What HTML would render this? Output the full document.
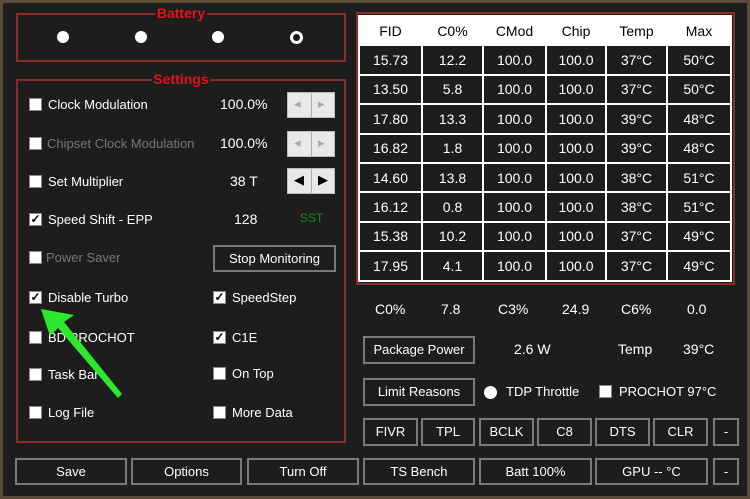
<html><head><style>
body{margin:0;width:750px;height:499px;background:#1d1d1d;font-family:"Liberation Sans",sans-serif;font-size:13px;color:#fff;position:relative;overflow:hidden}
.a{position:absolute;white-space:nowrap}
.box{position:absolute;border:2px solid #8b2c2c;box-sizing:border-box}
.ttl{position:absolute;color:#e0141a;font-weight:bold;font-size:14px;background:#1d1d1d;padding:0 2px;transform:translateX(-50%);top:-10px;left:50%}
.cb{position:absolute;width:13px;height:13px;background:#fff;border:1px solid #888;box-sizing:border-box;color:#000;font-size:12px;line-height:11px;text-align:center;font-weight:bold}
.btn{position:absolute;border:2px solid #7a7a7a;box-sizing:border-box;text-align:center;color:#fff;background:#1d1d1d}
.dot{position:absolute;width:12px;height:12px;border-radius:50%;background:#fff}
table{border-collapse:collapse;table-layout:fixed}
td{border:2px solid #fff;text-align:center;height:29.4px;padding:0;font-size:14px;line-height:14px}
.spin{position:absolute;width:48px;height:26px;background:#e8e8e8;border:1px solid #bbb;box-sizing:border-box}
.spin i{position:absolute;top:0;width:23px;height:24px;border-right:1px solid #aaa}
</style></head><body>
<div style="position:absolute;inset:0;border:3px solid #5a4a3a;box-sizing:border-box"></div>
<div class="box" style="left:16px;top:13px;width:330px;height:49px"><span class="ttl">Battery</span></div>
<div class="dot" style="left:57px;top:31px"></div><div class="dot" style="left:135px;top:31px"></div><div class="dot" style="left:212px;top:31px"></div>
<div class="dot" style="left:290px;top:31px;background:none;border:3px solid #fff;width:7px;height:7px"></div>
<div class="box" style="left:16px;top:79px;width:330px;height:364px"><span class="ttl">Settings</span></div>

<div class="cb" style="left:29px;top:98px"></div><div class="a" style="left:48px;top:97px">Clock Modulation</div><div class="a" style="left:220px;top:96px;font-size:14px">100.0%</div>
<div class="cb" style="left:29px;top:137px"></div><div class="a" style="left:47px;top:136px;color:#777">Chipset Clock Modulation</div><div class="a" style="left:220px;top:135px;font-size:14px">100.0%</div>
<div class="cb" style="left:29px;top:175px"></div><div class="a" style="left:48px;top:174px">Set Multiplier</div><div class="a" style="left:230px;top:173px;font-size:14px">38 T</div>
<div class="cb" style="left:29px;top:213px">✓</div><div class="a" style="left:48px;top:212px">Speed Shift - EPP</div><div class="a" style="left:234px;top:211px;font-size:14px">128</div><div class="a" style="left:300px;top:211px;color:#1a8a1a;font-size:12px">SST</div>
<div class="cb" style="left:29px;top:251px"></div><div class="a" style="left:46px;top:250px;color:#777">Power Saver</div>
<div class="btn" style="left:213px;top:245px;width:123px;height:27px;line-height:23px">Stop Monitoring</div>

<div class="spin" style="left:287px;top:92px"><i style="left:0"></i><span class="a" style="left:6px;top:3px;color:#aaa">◂</span><span class="a" style="left:30px;top:3px;color:#aaa">▸</span></div>
<div class="spin" style="left:287px;top:131px"><i style="left:0"></i><span class="a" style="left:6px;top:3px;color:#aaa">◂</span><span class="a" style="left:30px;top:3px;color:#aaa">▸</span></div>
<div class="spin" style="left:287px;top:168px"><i style="left:0"></i><span class="a" style="left:6px;top:3px;color:#000">◀</span><span class="a" style="left:30px;top:3px;color:#000">▶</span></div>

<div class="cb" style="left:29px;top:291px">✓</div><div class="a" style="left:48px;top:290px">Disable Turbo</div>
<div class="cb" style="left:29px;top:331px"></div><div class="a" style="left:48px;top:330px">BD PROCHOT</div>
<div class="cb" style="left:29px;top:368px"></div><div class="a" style="left:48px;top:367px">Task Bar</div>
<div class="cb" style="left:29px;top:406px"></div><div class="a" style="left:48px;top:405px">Log File</div>
<div class="cb" style="left:213px;top:291px">✓</div><div class="a" style="left:232px;top:290px">SpeedStep</div>
<div class="cb" style="left:213px;top:331px">✓</div><div class="a" style="left:232px;top:330px">C1E</div>
<div class="cb" style="left:213px;top:367px"></div><div class="a" style="left:232px;top:366px">On Top</div>
<div class="cb" style="left:213px;top:406px"></div><div class="a" style="left:232px;top:405px">More Data</div>
<svg class="a" style="left:0;top:0" width="360" height="499"><polygon points="41,309 74,315 64,322 122,394 118,398 58,328 50,336" fill="#2ee82e"/></svg>

<div class="box" style="left:356px;top:12px;width:379px;height:273px;border-color:#8b2c2c"></div>
<table class="a" style="left:358px;top:15px;width:372px;background:#1d1d1d">
<colgroup><col style="width:63px"><col style="width:61px"><col style="width:63px"><col style="width:60px"><col style="width:61px"><col style="width:64px"></colgroup>
<tr style="background:#fff;color:#000"><td style="height:29px">FID</td><td>C0%</td><td>CMod</td><td>Chip</td><td>Temp</td><td>Max</td></tr>
<tr><td>15.73</td><td>12.2</td><td>100.0</td><td>100.0</td><td>37°C</td><td>50°C</td></tr>
<tr><td>13.50</td><td>5.8</td><td>100.0</td><td>100.0</td><td>37°C</td><td>50°C</td></tr>
<tr><td>17.80</td><td>13.3</td><td>100.0</td><td>100.0</td><td>39°C</td><td>48°C</td></tr>
<tr><td>16.82</td><td>1.8</td><td>100.0</td><td>100.0</td><td>39°C</td><td>48°C</td></tr>
<tr><td>14.60</td><td>13.8</td><td>100.0</td><td>100.0</td><td>38°C</td><td>51°C</td></tr>
<tr><td>16.12</td><td>0.8</td><td>100.0</td><td>100.0</td><td>38°C</td><td>51°C</td></tr>
<tr><td>15.38</td><td>10.2</td><td>100.0</td><td>100.0</td><td>37°C</td><td>49°C</td></tr>
<tr><td>17.95</td><td>4.1</td><td>100.0</td><td>100.0</td><td>37°C</td><td>49°C</td></tr>
</table>

<div class="a" style="left:375px;top:301px;font-size:14px">C0%</div><div class="a" style="left:441px;top:301px;font-size:14px">7.8</div>
<div class="a" style="left:498px;top:301px;font-size:14px">C3%</div><div class="a" style="left:562px;top:301px;font-size:14px">24.9</div>
<div class="a" style="left:621px;top:301px;font-size:14px">C6%</div><div class="a" style="left:687px;top:301px;font-size:14px">0.0</div>
<div class="btn" style="left:363px;top:336px;width:112px;height:28px;line-height:24px">Package Power</div>
<div class="a" style="left:514px;top:341px;font-size:14px">2.6 W</div><div class="a" style="left:618px;top:341px;font-size:14px">Temp</div><div class="a" style="left:683px;top:341px;font-size:14px">39°C</div>
<div class="btn" style="left:363px;top:378px;width:112px;height:28px;line-height:24px">Limit Reasons</div>
<div class="dot" style="left:484px;top:386px;width:13px;height:13px"></div><div class="a" style="left:506px;top:384px">TDP Throttle</div>
<div class="cb" style="left:599px;top:385px"></div><div class="a" style="left:619px;top:384px">PROCHOT 97°C</div>

<div class="btn" style="left:363px;top:418px;width:55px;height:28px;line-height:24px">FIVR</div>
<div class="btn" style="left:421px;top:418px;width:54px;height:28px;line-height:24px">TPL</div>
<div class="btn" style="left:479px;top:418px;width:55px;height:28px;line-height:24px">BCLK</div>
<div class="btn" style="left:537px;top:418px;width:55px;height:28px;line-height:24px">C8</div>
<div class="btn" style="left:595px;top:418px;width:55px;height:28px;line-height:24px">DTS</div>
<div class="btn" style="left:653px;top:418px;width:55px;height:28px;line-height:24px">CLR</div>
<div class="btn" style="left:713px;top:418px;width:26px;height:28px;line-height:24px">-</div>

<div class="btn" style="left:15px;top:458px;width:112px;height:27px;line-height:23px">Save</div>
<div class="btn" style="left:131px;top:458px;width:111px;height:27px;line-height:23px">Options</div>
<div class="btn" style="left:247px;top:458px;width:112px;height:27px;line-height:23px">Turn Off</div>
<div class="btn" style="left:363px;top:458px;width:112px;height:27px;line-height:23px">TS Bench</div>
<div class="btn" style="left:479px;top:458px;width:113px;height:27px;line-height:23px">Batt 100%</div>
<div class="btn" style="left:595px;top:458px;width:113px;height:27px;line-height:23px">GPU -- °C</div>
<div class="btn" style="left:713px;top:458px;width:26px;height:27px;line-height:23px">-</div>
</body></html>
